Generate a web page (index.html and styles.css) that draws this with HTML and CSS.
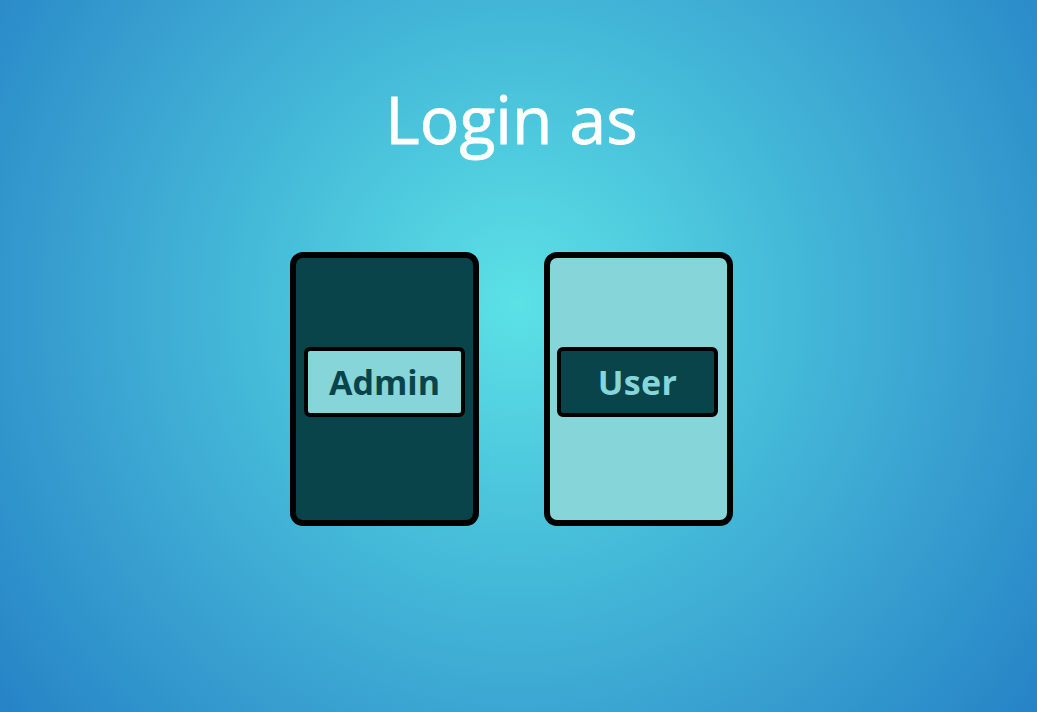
FILE: index.html
```html
<!DOCTYPE html>
<html lang="en">
<head>
<meta charset="utf-8">
<title>Login as</title>
<link rel="stylesheet" href="styles.css">
</head>
<body>
<main class="page">
  <h1 class="title">Login as</h1>
  <div class="cards">
    <section class="card card-admin"><button class="role">Admin</button></section>
    <section class="card card-user"><button class="role">User</button></section>
  </div>
</main>
</body>
</html>
```

FILE: styles.css
```css
* { box-sizing: border-box; }
body {
  margin: 0;
  font-family: "Open Sans", "Liberation Sans", sans-serif;
}
.page {
  height: 712px;
  overflow: hidden;
  padding: 80px 14px 0 0;
  display: flex;
  flex-direction: column;
  align-items: center;
  background: radial-gradient(circle at 518px 304px, #5ce1e6 0%, #44b9d8 42%, #3aa3d1 65%, #2583c6 100%);
}
.title {
  margin: 0;
  color: #fff;
  font-size: 66px;
  line-height: 76px;
  font-weight: 400;
  -webkit-text-stroke: 0.8px #fff;
}
.cards {
  margin-top: 96px;
  display: flex;
  gap: 65px;
}
.card {
  width: 189px;
  height: 274px;
  border: 6px solid #000;
  border-radius: 13px;
  padding-top: 89px;
  display: flex;
  justify-content: center;
  align-items: flex-start;
}
.role {
  width: 161px;
  height: 70px;
  padding: 0;
  border: 4px solid #000;
  border-radius: 6px;
  font-family: inherit;
  font-weight: 700;
  font-size: 34px;
  line-height: 40px;
}
.card-admin { background: #084449; }
.card-admin .role { background: #85d5d9; color: #084449; }
.card-user { background: #85d5d9; padding-right: 2px; }
.card-user .role { background: #084449; color: #85d5d9; letter-spacing: 0.3px; }
```
